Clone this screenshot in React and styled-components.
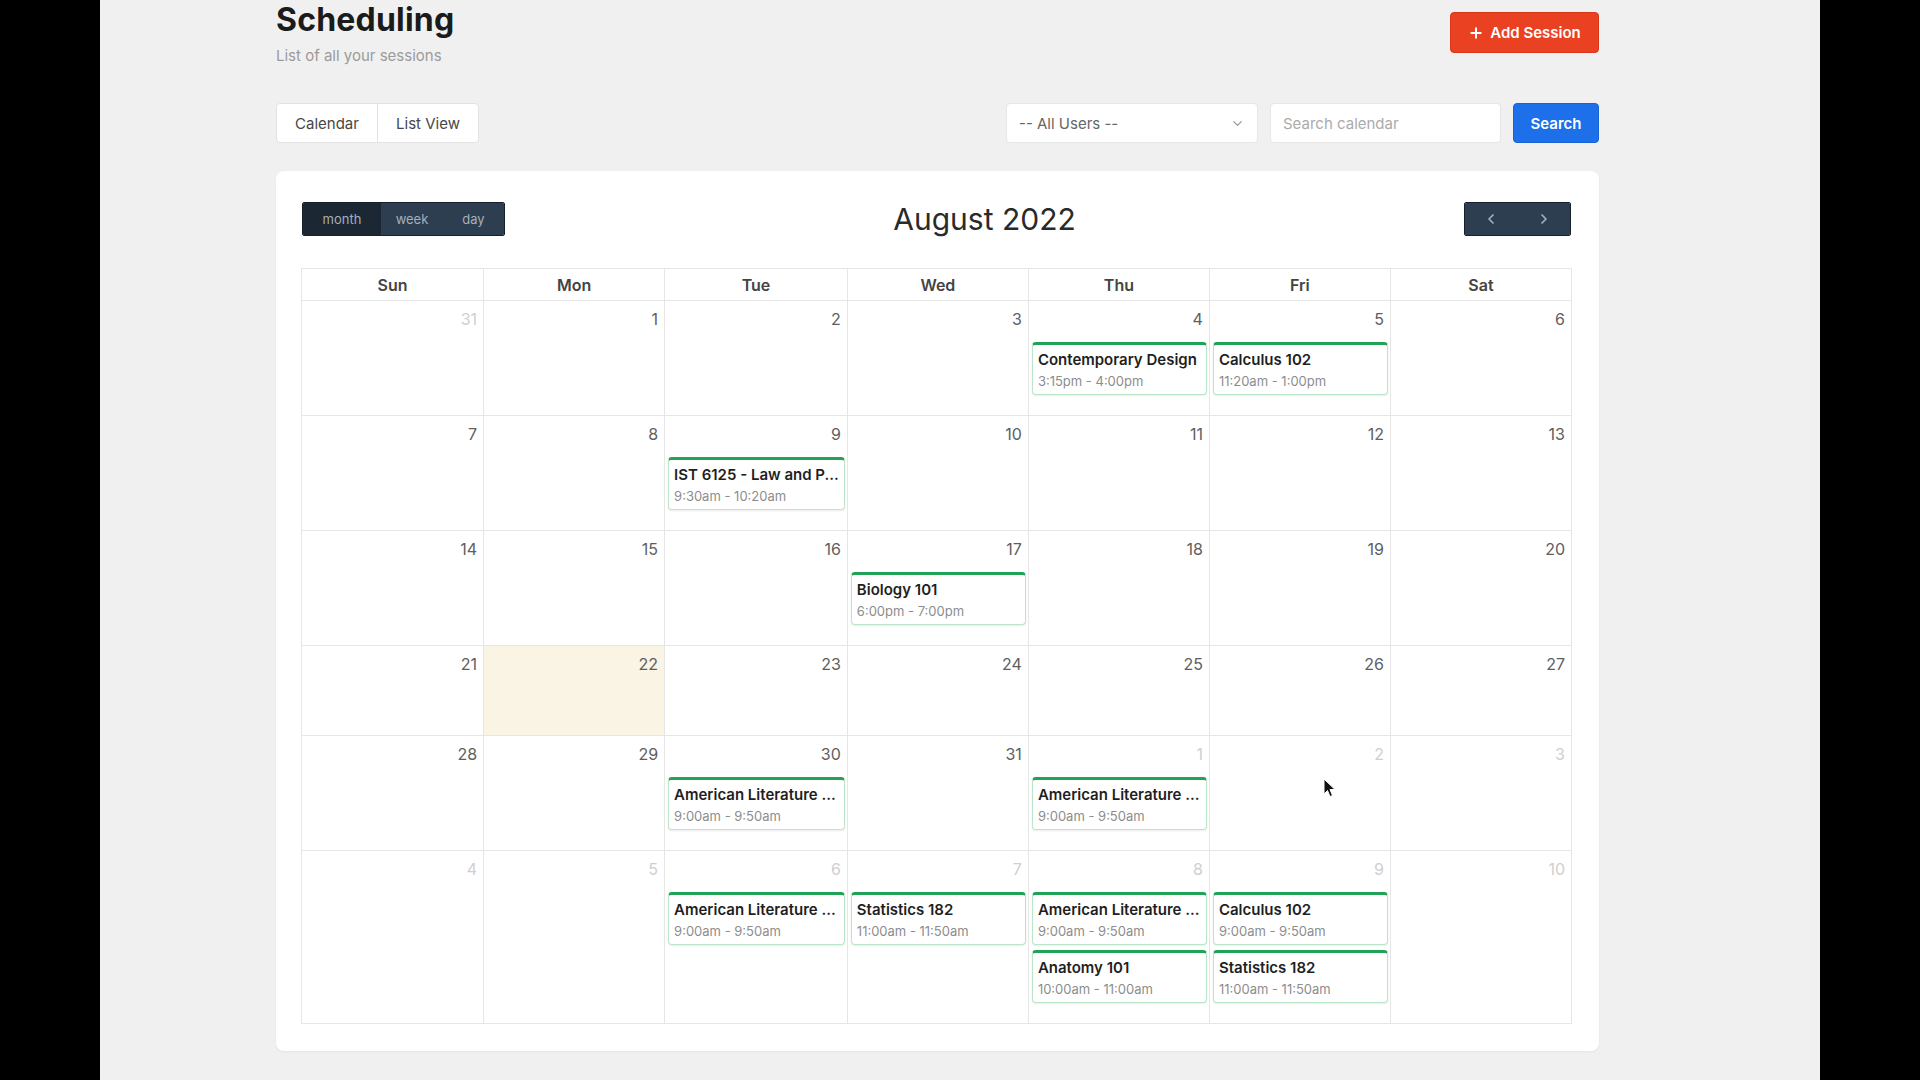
import React from "react";
import styled, { createGlobalStyle } from "styled-components";
import { ChevronDown, ChevronLeft, ChevronRight, Plus } from "lucide-react";

const GlobalStyle = createGlobalStyle`
  html, body {
    margin: 0;
    padding: 0;
    background: #000;
    font-family: Inter, "Noto Sans", "Liberation Sans", sans-serif;
  }
  * { box-sizing: border-box; }
`;

const Frame = styled.div`
  width: 1920px;
  height: 1080px;
  background: #000;
  padding: 0 100px;
  overflow: hidden;
  position: relative;
`;

const Stage = styled.div`
  height: 100%;
  background: #f0f0f0;
  padding-left: 176px;
`;

const Content = styled.div`
  width: 1323px;
`;

const Header = styled.div`
  display: flex;
  justify-content: space-between;
  align-items: flex-start;
`;

const Title = styled.h1`
  margin: 0;
  padding-top: 2px;
  font-size: 32px;
  line-height: 36px;
  font-weight: 700;
  color: #1b1b1b;
  letter-spacing: 0.2px;
`;

const Subtitle = styled.p`
  margin: 8px 0 0;
  font-size: 15px;
  line-height: 20px;
  color: #9b9b9b;
`;

const Button = styled.button`
  display: flex;
  align-items: center;
  justify-content: center;
  gap: 6px;
  width: ${(p) => p.w}px;
  height: ${(p) => p.h || 40}px;
  padding: 0;
  border-radius: 4px;
  border: 1px solid ${(p) => p.border};
  background: ${(p) => p.bg};
  color: #fff;
  font-family: inherit;
  font-size: 15px;
  font-weight: 600;
  cursor: pointer;
`;

const AddButton = styled(Button)`
  margin-top: 12px;
`;

const Toolbar = styled.div`
  display: flex;
  justify-content: space-between;
  align-items: center;
  margin-top: 37px;
`;

const Segmented = styled.div`
  display: flex;
  background: #fff;
  border: 1px solid #e3e3e3;
  border-radius: 4px;
  overflow: hidden;
`;

const SegButton = styled.div`
  width: ${(p) => p.w}px;
  height: 38px;
  display: flex;
  align-items: center;
  justify-content: center;
  font-size: 15px;
  color: #474747;
  border-left: ${(p) => (p.first ? "none" : "1px solid #e3e3e3")};
`;

const Filters = styled.div`
  display: flex;
  gap: 12px;
  align-items: center;
`;

const Field = styled.div`
  width: ${(p) => p.w}px;
  height: 40px;
  background: #fff;
  border: 1px solid #e6e6e6;
  border-radius: 4px;
  display: flex;
  align-items: center;
  justify-content: space-between;
  padding: 0 12px;
  font-size: 15px;
  color: ${(p) => p.color};
`;

const Card = styled.div`
  margin-top: 28px;
  background: #fff;
  border-radius: 8px;
  box-shadow: 0 1px 3px rgba(0, 0, 0, 0.05);
  padding: 30px 27px 27px 25px;
`;

const CalBar = styled.div`
  display: flex;
  justify-content: space-between;
  align-items: center;
  padding: 0 1px;
`;

const BtnGroup = styled.div`
  display: flex;
  border: 1px solid #17212b;
  border-radius: 2px;
  overflow: hidden;
`;

const CalBtn = styled.div`
  width: ${(p) => p.w}px;
  height: 32px;
  display: flex;
  align-items: center;
  justify-content: center;
  background: ${(p) => (p.active ? "#1b2733" : "#2c3e50")};
  color: #a7afb8;
  font-size: 13px;
`;

const MonthTitle = styled.h2`
  margin: 0;
  font-size: 30px;
  font-weight: 400;
  color: #2a2a2a;
`;

const Grid = styled.div`
  margin-top: 31px;
  border: 1px solid #e6e6e6;
  display: grid;
  grid-template-columns: repeat(7, 1fr);
`;

const DayHead = styled.div`
  height: 32px;
  display: flex;
  align-items: center;
  justify-content: center;
  font-size: 16px;
  font-weight: 600;
  color: #444;
  border-left: ${(p) => (p.first ? "none" : "1px solid #e6e6e6")};
  border-bottom: 1px solid #e6e6e6;
`;

const Cell = styled.div`
  min-height: 90px;
  padding: 0 2px 20px 3px;
  background: ${(p) => (p.today ? "#faf4e4" : "#fff")};
  border-left: ${(p) => (p.first ? "none" : "1px solid #e6e6e6")};
  border-top: ${(p) => (p.firstRow ? "none" : "1px solid #e6e6e6")};
  display: flex;
  flex-direction: column;
  gap: 5px;
`;

const DayNum = styled.div`
  height: 36px;
  padding: 6px 4px 0 0;
  text-align: right;
  font-size: 16px;
  line-height: 24px;
  color: ${(p) => (p.other ? "#cfcfcf" : "#5e5e5e")};
`;

const Event = styled.div`
  background: #fff;
  border: 1px solid #b9e6c8;
  border-top: 3px solid #20a257;
  border-radius: 4px;
  padding: 5px 5px 4px;
  box-shadow: 0 1px 2px rgba(0, 0, 0, 0.08);
`;

const EventTitle = styled.div`
  font-size: 15px;
  line-height: 20px;
  font-weight: 600;
  color: #1f1f1f;
  white-space: nowrap;
  overflow: hidden;
`;

const EventTime = styled.div`
  margin-top: 2px;
  font-size: 13px;
  line-height: 18px;
  color: #8d8d8d;
  white-space: nowrap;
`;

const Cursor = styled.svg`
  position: absolute;
  left: 1323px;
  top: 778px;
`;

const ev = (title, time) => ({ title, time });
const AL = ev("American Literature ...", "9:00am - 9:50am");

const weeks = [
  [
    { n: 31, other: true },
    { n: 1 },
    { n: 2 },
    { n: 3 },
    { n: 4, events: [ev("Contemporary Design", "3:15pm - 4:00pm")] },
    { n: 5, events: [ev("Calculus 102", "11:20am - 1:00pm")] },
    { n: 6 },
  ],
  [
    { n: 7 },
    { n: 8 },
    { n: 9, events: [ev("IST 6125 - Law and P...", "9:30am - 10:20am")] },
    { n: 10 },
    { n: 11 },
    { n: 12 },
    { n: 13 },
  ],
  [
    { n: 14 },
    { n: 15 },
    { n: 16 },
    { n: 17, events: [ev("Biology 101", "6:00pm - 7:00pm")] },
    { n: 18 },
    { n: 19 },
    { n: 20 },
  ],
  [
    { n: 21 },
    { n: 22, today: true },
    { n: 23 },
    { n: 24 },
    { n: 25 },
    { n: 26 },
    { n: 27 },
  ],
  [
    { n: 28 },
    { n: 29 },
    { n: 30, events: [AL] },
    { n: 31 },
    { n: 1, other: true, events: [AL] },
    { n: 2, other: true },
    { n: 3, other: true },
  ],
  [
    { n: 4, other: true },
    { n: 5, other: true },
    { n: 6, other: true, events: [AL] },
    { n: 7, other: true, events: [ev("Statistics 182", "11:00am - 11:50am")] },
    { n: 8, other: true, events: [AL, ev("Anatomy 101", "10:00am - 11:00am")] },
    {
      n: 9,
      other: true,
      events: [ev("Calculus 102", "9:00am - 9:50am"), ev("Statistics 182", "11:00am - 11:50am")],
    },
    { n: 10, other: true },
  ],
];

const days = ["Sun", "Mon", "Tue", "Wed", "Thu", "Fri", "Sat"];

export default function App() {
  return (
    <Frame>
      <GlobalStyle />
      <Stage>
        <Content>
          <Header>
            <div>
              <Title>Scheduling</Title>
              <Subtitle>List of all your sessions</Subtitle>
            </div>
            <AddButton w={149} h={41} bg="#ea4122" border="#d9361a">
              <Plus size={16} strokeWidth={3} />
              Add Session
            </AddButton>
          </Header>

          <Toolbar>
            <Segmented>
              <SegButton first w={100}>Calendar</SegButton>
              <SegButton w={101}>List View</SegButton>
            </Segmented>
            <Filters>
              <Field w={252} color="#666">
                -- All Users --
                <ChevronDown size={15} color="#9a9a9a" />
              </Field>
              <Field w={231} color="#ababab">Search calendar</Field>
              <Button w={86} bg="#1d6fea" border="#1863d6">
                Search
              </Button>
            </Filters>
          </Toolbar>

          <Card>
            <CalBar>
              <BtnGroup>
                <CalBtn active w={78}>month</CalBtn>
                <CalBtn w={62}>week</CalBtn>
                <CalBtn w={61}>day</CalBtn>
              </BtnGroup>
              <MonthTitle>August 2022</MonthTitle>
              <BtnGroup>
                <CalBtn w={53}>
                  <ChevronLeft size={16} strokeWidth={2.5} color="#a7b1bb" />
                </CalBtn>
                <CalBtn w={52}>
                  <ChevronRight size={16} strokeWidth={2.5} color="#a7b1bb" />
                </CalBtn>
              </BtnGroup>
            </CalBar>

            <Grid>
              {days.map((d, i) => (
                <DayHead key={d} first={i === 0}>
                  {d}
                </DayHead>
              ))}
              {weeks.map((week, wi) =>
                week.map((day, di) => (
                  <Cell
                    key={`${wi}-${di}`}
                    first={di === 0}
                    firstRow={wi === 0}
                    today={day.today}
                  >
                    <DayNum other={day.other}>{day.n}</DayNum>
                    {(day.events || []).map((e, ei) => (
                      <Event key={ei}>
                        <EventTitle>{e.title}</EventTitle>
                        <EventTime>{e.time}</EventTime>
                      </Event>
                    ))}
                  </Cell>
                ))
              )}
            </Grid>
          </Card>
        </Content>
      </Stage>
      <Cursor width="14" height="20" viewBox="0 0 14 20">
        <path d="M1 1 L1 16 L4.5 12.5 L7 18.5 L9.5 17.5 L7 11.5 L12 11.5 Z" fill="#111" stroke="#fff" strokeWidth="1" />
      </Cursor>
    </Frame>
  );
}
